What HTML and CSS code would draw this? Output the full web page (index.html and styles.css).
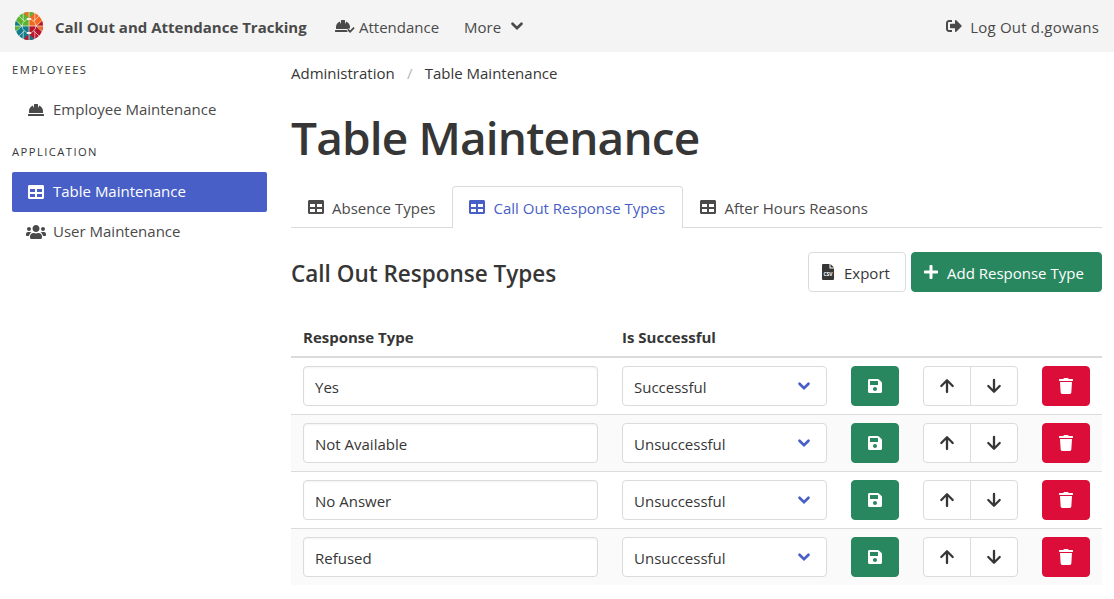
FILE: index.html
```
<!DOCTYPE html>
<html lang="en">
<head>
<meta charset="utf-8">
<title>Table Maintenance</title>
<link rel="stylesheet" href="styles.css">
</head>
<body>
<svg class="sprite" aria-hidden="true">
<symbol id="hat" viewBox="0 0 512 512"><path d="M480 288c0-80.25-49.28-148.92-119.19-177.62L320 192V80a16 16 0 0 0-16-16h-96a16 16 0 0 0-16 16v112l-40.81-81.62C81.28 139.08 32 207.75 32 288v64h448zm16 96H16a16 16 0 0 0-16 16v32a16 16 0 0 0 16 16h480a16 16 0 0 0 16-16v-32a16 16 0 0 0-16-16z"/></symbol>
<symbol id="table" viewBox="0 0 512 512"><path d="M464 32H48C21.49 32 0 53.49 0 80v352c0 26.51 21.49 48 48 48h416c26.51 0 48-21.49 48-48V80c0-26.51-21.49-48-48-48zM224 416H64v-96h160v96zm0-160H64v-96h160v96zm224 160H288v-96h160v96zm0-160H288v-96h160v96z"/></symbol>
<symbol id="users" viewBox="0 0 640 512"><path d="M96 224c35.3 0 64-28.7 64-64s-28.7-64-64-64-64 28.7-64 64 28.7 64 64 64zm448 0c35.3 0 64-28.7 64-64s-28.7-64-64-64-64 28.7-64 64 28.7 64 64 64zm32 32h-64c-17.600 0-33.500 7.100-45.100 18.600 40.300 22.100 68.900 62 75.100 109.400h66c17.700 0 32-14.300 32-32v-32c0-35.300-28.700-64-64-64zm-256 0c61.900 0 112-50.100 112-112S381.900 32 320 32 208 82.100 208 144s50.100 112 112 112zm76.800 32h-8.300c-20.800 10-43.900 16-68.500 16s-47.600-6-68.500-16h-8.300C179.600 288 128 339.600 128 403.200V432c0 26.500 21.500 48 48 48h288c26.500 0 48-21.500 48-48v-28.800c0-63.600-51.600-115.200-115.200-115.200zm-223.700-13.400C161.500 263.100 145.600 256 128 256H64c-35.300 0-64 28.700-64 64v32c0 17.700 14.300 32 32 32h65.900c6.300-47.400 34.900-87.300 75.200-109.400z"/></symbol>
<symbol id="save" viewBox="0 0 448 512"><path d="M433.941 129.941l-83.882-83.882A48 48 0 0 0 316.118 32H48C21.490 32 0 53.490 0 80v352c0 26.510 21.490 48 48 48h352c26.510 0 48-21.490 48-48V163.882a48 48 0 0 0-14.059-33.941zM224 416c-35.346 0-64-28.654-64-64 0-35.346 28.654-64 64-64s64 28.654 64 64c0 35.346-28.654 64-64 64zm96-304.520V212c0 6.627-5.373 12-12 12H76c-6.627 0-12-5.373-12-12V108c0-6.627 5.373-12 12-12h228.520c3.183 0 6.235 1.264 8.485 3.515l3.480 3.480A11.996 11.996 0 0 1 320 111.480z"/></symbol>
<symbol id="trash" viewBox="0 0 448 512"><path d="M432 32H312l-9.400-18.700A24 24 0 0 0 281.100 0H166.800a23.720 23.720 0 0 0-21.400 13.300L136 32H16A16 16 0 0 0 0 48v32a16 16 0 0 0 16 16h416a16 16 0 0 0 16-16V48a16 16 0 0 0-16-16zM53.200 467a48 48 0 0 0 47.900 45h245.800a48 48 0 0 0 47.900-45L416 128H32z"/></symbol>
<symbol id="plus" viewBox="0 0 448 512"><path d="M416 208H272V64c0-17.670-14.330-32-32-32h-32c-17.670 0-32 14.330-32 32v144H32c-17.670 0-32 14.330-32 32v32c0 17.670 14.330 32 32 32h144v144c0 17.670 14.330 32 32 32h32c17.670 0 32-14.330 32-32V304h144c17.670 0 32-14.330 32-32v-32c0-17.670-14.330-32-32-32z"/></symbol>
<symbol id="logout" viewBox="0 0 512 512"><path d="M497 273L329 441c-15 15-41 4.500-41-17v-96H152c-13.300 0-24-10.700-24-24v-96c0-13.300 10.700-24 24-24h136V88c0-21.400 25.900-32 41-17l168 168c9.300 9.400 9.300 24.600 0 34zM192 436v-40c0-6.600-5.400-12-12-12H96c-17.700 0-32-14.300-32-32V160c0-17.700 14.300-32 32-32h84c6.600 0 12-5.400 12-12V76c0-6.600-5.400-12-12-12H96c-53 0-96 43-96 96v192c0 53 43 96 96 96h84c6.600 0 12-5.400 12-12z"/></symbol>
<symbol id="up" viewBox="0 0 14 16"><path class="line" d="M7 14V2.500M1.300 8 7 2.300 12.700 8"/></symbol>
<symbol id="down" viewBox="0 0 14 16"><path class="line" d="M7 2v11.500M1.300 8 7 13.700 12.700 8"/></symbol>
<symbol id="chevron" viewBox="0 0 14 10"><path class="chev" d="M2.500 2.800 7 7.200l4.500-4.400"/></symbol>
</svg>

<nav class="navbar">
  <a class="brand">
    <svg class="logo" viewBox="-14 -14 28 28">
      <path fill="#5bb531" d="M0 0V-14A14 14 0 0 0-14 0z"/><path fill="#f26a21" d="M0 0V-14A14 14 0 0 1 14 0z"/>
      <path fill="#0d7c8c" d="M0 0V14A14 14 0 0 1-14 0z"/><path fill="#b9152b" d="M0 0V14A14 14 0 0 0 14 0z"/>
      <path fill="#f26a21" d="M0-8V-14A14 14 0 0 0-5.400-12.900z"/><path fill="#5bb531" d="M0-8V-14A14 14 0 0 1 5.400-12.900z"/>
      <path fill="#0d7c8c" d="M-8 0H-14A14 14 0 0 1-12.900-5.400z"/><path fill="#5bb531" d="M-8 0H-14A14 14 0 0 0-12.900 5.400z"/>
      <path fill="#b9152b" d="M8 0H14A14 14 0 0 0 12.900-5.400z"/><path fill="#f26a21" d="M8 0H14A14 14 0 0 1 12.900 5.400z"/>
      <path fill="#b9152b" d="M0 8V14A14 14 0 0 1-5.400 12.900z"/><path fill="#0d7c8c" d="M0 8V14A14 14 0 0 0 5.400 12.900z"/>
      <g class="spokes"><path d="M0-14V14M-14 0H14M-10-10-4.600-4.600M10-10 4.600-4.600M-10 10-4.600 4.600M10 10 4.600 4.600M-5.800-13V-5.500M5.800-13V-5.500M-5.800 13V5.500M5.800 13V5.500M-13-5.400-7 0-13 5.400M13-5.400 7 0 13 5.400"/><circle r="6.800"/></g>
      <path fill="#f5f2ea" d="M-2.500-8H2.500L1.500-6h-3zM-2.500 8H2.500L1.500 6h-3z"/>
    </svg>
    <span>Call Out and Attendance Tracking</span>
  </a>
  <a class="nav-attendance"><svg class="hat-check" viewBox="0 0 20 16"><svg width="16" height="16"><use href="#hat"/></svg><path class="check-gap" d="M12.800 11.300l2.300 2.400 4-4"/><path class="check" d="M12.800 11.300l2.300 2.400 4-4"/></svg><span>Attendance</span></a>
  <a class="nav-more"><span>More</span><svg class="chevron"><use href="#chevron"/></svg></a>
  <a class="nav-logout"><svg class="ico"><use href="#logout"/></svg><span>Log Out d.gowans</span></a>
</nav>

<div class="layout">
  <aside class="menu">
    <p class="menu-label">EMPLOYEES</p>
    <a class="menu-item"><svg class="ico"><use href="#hat"/></svg><span>Employee Maintenance</span></a>
    <p class="menu-label second">APPLICATION</p>
    <a class="menu-item active"><svg class="ico"><use href="#table"/></svg><span>Table Maintenance</span></a>
    <a class="menu-item"><svg class="ico wide"><use href="#users"/></svg><span>User Maintenance</span></a>
  </aside>

  <main class="content">
    <div class="breadcrumb"><span>Administration</span><i>/</i><span>Table Maintenance</span></div>
    <h1>Table Maintenance</h1>
    <div class="tabs">
      <a class="tab"><svg class="ico"><use href="#table"/></svg><span>Absence Types</span></a>
      <a class="tab current"><svg class="ico"><use href="#table"/></svg><span>Call Out Response Types</span></a>
      <a class="tab"><svg class="ico"><use href="#table"/></svg><span>After Hours Reasons</span></a>
    </div>
    <div class="level">
      <h2>Call Out Response Types</h2>
      <div class="actions">
        <button class="button export"><svg class="file" viewBox="0 0 12 16"><path d="M1 0h6.500v4.500H12V15a1 1 0 0 1-1 1H1a1 1 0 0 1-1-1V1a1 1 0 0 1 1-1zM8.500 0 12 3.500H8.500z"/><text x="6" y="11.600">CSV</text></svg><span>Export</span></button>
        <button class="button green add"><svg class="ico plus"><use href="#plus"/></svg><span>Add Response Type</span></button>
      </div>
    </div>
    <table>
      <colgroup><col class="c1"><col class="c2"><col class="c3"><col class="c4"><col class="c5"></colgroup>
      <thead><tr><th>Response Type</th><th>Is Successful</th><th></th><th></th><th></th></tr></thead>
      <tbody>
        <tr><td><div class="field input">Yes</div></td><td><div class="field select"><span>Successful</span><svg class="chevron"><use href="#chevron"/></svg></div></td><td><button class="button green sq"><svg class="ico"><use href="#save"/></svg></button></td><td><div class="pair"><button class="button"><svg class="ico"><use href="#up"/></svg></button><button class="button"><svg class="ico"><use href="#down"/></svg></button></div></td><td><button class="button red sq"><svg class="ico"><use href="#trash"/></svg></button></td></tr>
        <tr><td><div class="field input">Not Available</div></td><td><div class="field select"><span>Unsuccessful</span><svg class="chevron"><use href="#chevron"/></svg></div></td><td><button class="button green sq"><svg class="ico"><use href="#save"/></svg></button></td><td><div class="pair"><button class="button"><svg class="ico"><use href="#up"/></svg></button><button class="button"><svg class="ico"><use href="#down"/></svg></button></div></td><td><button class="button red sq"><svg class="ico"><use href="#trash"/></svg></button></td></tr>
        <tr><td><div class="field input">No Answer</div></td><td><div class="field select"><span>Unsuccessful</span><svg class="chevron"><use href="#chevron"/></svg></div></td><td><button class="button green sq"><svg class="ico"><use href="#save"/></svg></button></td><td><div class="pair"><button class="button"><svg class="ico"><use href="#up"/></svg></button><button class="button"><svg class="ico"><use href="#down"/></svg></button></div></td><td><button class="button red sq"><svg class="ico"><use href="#trash"/></svg></button></td></tr>
        <tr><td><div class="field input">Refused</div></td><td><div class="field select"><span>Unsuccessful</span><svg class="chevron"><use href="#chevron"/></svg></div></td><td><button class="button green sq"><svg class="ico"><use href="#save"/></svg></button></td><td><div class="pair"><button class="button"><svg class="ico"><use href="#up"/></svg></button><button class="button"><svg class="ico"><use href="#down"/></svg></button></div></td><td><button class="button red sq"><svg class="ico"><use href="#trash"/></svg></button></td></tr>
      </tbody>
    </table>
  </main>
</div>
</body>
</html>
```
FILE: styles.css
```
* { box-sizing: border-box; margin: 0; padding: 0; }
html, body { height: 599px; overflow: hidden; }
body { font: 15px/24px "Segoe UI", "Open Sans", sans-serif; color: #363636; background: #fff; }
svg { fill: currentColor; flex: none; display: block; }
.sprite { position: absolute; width: 0; height: 0; }
.line { fill: none; stroke: currentColor; stroke-width: 2.3; stroke-linejoin: round; stroke-linecap: round; }
.chev { fill: none; stroke: currentColor; stroke-width: 2.7; stroke-linecap: round; }
.chevron { width: 14px; height: 10px; }
.ico { width: 16px; height: 16px; }
.ico.wide { width: 20px; margin: 0 -2px; }

.navbar { height: 52px; background: #f4f4f4; color: #4a4a4a; display: flex; align-items: center; padding: 2px 15px 0; }
.navbar a { display: flex; align-items: center; }
.brand { font-weight: 700; width: 320px; gap: 12px; white-space: nowrap; }
.logo { width: 28px; height: 28px; margin-top: -3px; }
.spokes { fill: none; stroke: #f5f2ea; stroke-width: .65; }
.nav-attendance { width: 129px; gap: 4px; }
.hat-check { width: 20px; height: 16px; margin-top: -2px; }
.check-gap, .check { fill: none; stroke: #f4f4f4; stroke-width: 3.5; }
.check { stroke: #4a4a4a; stroke-width: 1.7; }
.nav-more { gap: 9px; }
.nav-more .chevron { margin-top: -3px; }
.nav-logout { margin-left: auto; gap: 8px; letter-spacing: .2px; }
.nav-logout .ico { margin-top: -3px; }

.layout { display: flex; }
.menu { width: 267px; padding: 8px 0 0 12px; color: #4a4a4a; }
.menu-label { font-size: 11.2px; line-height: 20px; letter-spacing: 1.45px; height: 30px; color: #363636; }
.menu-label.second { margin-top: 12px; }
.menu-item { height: 40px; display: flex; align-items: center; gap: 9px; padding-left: 16px; border-radius: 2px; }
.menu-item span { padding-bottom: 2px; }
.menu-item.active { background: #485fc7; color: #fff; }

.content { margin-left: 24px; width: 811px; padding-top: 9px; }
.breadcrumb { display: flex; height: 24px; }
.breadcrumb i { width: 30px; text-align: center; color: #b5b5b5; font-style: normal; }
h1 { font-size: 46px; line-height: 54px; font-weight: 600; letter-spacing: -.85px; margin-top: 25px; white-space: nowrap; }
.tabs { display: flex; height: 42px; margin-top: 22px; border-bottom: 1px solid #dbdbdb; color: #4a4a4a; }
.tab { height: 42px; padding: 2px 17px 0; display: flex; align-items: center; gap: 8px; white-space: nowrap; }
.tab .ico { margin-top: -2px; }
.tab.current { color: #485fc7; background: #fff; border: 1px solid #dbdbdb; border-bottom: 0; border-radius: 4px 4px 0 0; padding: 1px 16px 0; width: 231px; }
.level { display: flex; justify-content: space-between; margin-top: 24px; height: 40px; }
h2 { font-size: 22.5px; line-height: 43px; font-weight: 600; white-space: nowrap; }
.actions { display: flex; gap: 5px; }
.button { height: 40px; border: 1px solid #dbdbdb; border-radius: 4px; background: #fff; color: #363636; font: inherit; display: flex; align-items: center; white-space: nowrap; }
.button span { padding-top: 2px; }
.export { width: 98px; padding-left: 13px; gap: 10px; }
.add { width: 191px; padding-left: 11px; gap: 8px; }
.file { width: 12px; height: 16px; }
.file text { font: 700 5px "Open Sans", sans-serif; fill: #fff; text-anchor: middle; }
.green { background: #29875f; border-color: #29875f; color: #fff; }
.red { background: #dc0d38; border-color: #dc0d38; color: #fff; }
.sq { width: 48px; justify-content: center; }

table { width: 811px; border-collapse: separate; border-spacing: 0; table-layout: fixed; margin-top: 24px; }
.c1 { width: 319px; }
.c2 { width: 229px; }
.c3 { width: 72px; }
.c4 { width: 119px; }
.c5 { width: 72px; }
th { height: 42px; padding: 9px 12px 7px; border-bottom: 2px solid #dbdbdb; text-align: left; font-weight: 700; }
td { height: 57px; padding: 8px 12px; border-bottom: 1px solid #dbdbdb; }
tbody tr:last-child td { height: 56px; border-bottom: 0; }
tbody tr:nth-child(even) { background: #fafafa; }
.field { height: 40px; border: 1px solid #dbdbdb; border-radius: 4px; background: #fff; padding: 8px 11px 0; }
.input { box-shadow: inset 0 1px 2px rgba(10,10,10,.05); }
.select { display: flex; justify-content: space-between; padding-right: 15px; }
.select .chevron { margin-top: 6px; color: #485fc7; }
.pair { display: flex; }
.pair .button { width: 48px; justify-content: center; border-radius: 4px 0 0 4px; }
.pair .button + .button { margin-left: -1px; border-radius: 0 4px 4px 0; }
```
